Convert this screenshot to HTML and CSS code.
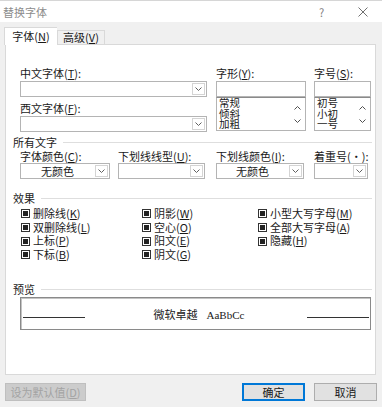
FILE: index.html
```html
<!DOCTYPE html>
<html lang="zh">
<head>
<meta charset="utf-8">
<link rel="stylesheet" href="styles.css">
</head>
<body>
<div class="dialog">
  <div class="titlebar">
    <span class="title">替换字体</span>
    <span class="help">?</span>
    <span class="close"><svg width="10" height="10" viewBox="0 0 10 10"><path d="M0.5 0.5L9.5 9.5M9.5 0.5L0.5 9.5" stroke="#707070" stroke-width="1" fill="none"/></svg></span>
  </div>
  <div class="tabs">
    <div class="tab active">字体(<u>N</u>)</div>
    <div class="tab">高级(<u>V</u>)</div>
  </div>
  <div class="panel">
    <div class="fonts">
      <div class="col c1">
        <div class="lbl">中文字体(<u>T</u>):</div>
        <div class="combo w186"><span class="val"></span><span class="arr"><svg width="7" height="4" viewBox="0 0 7 4"><path d="M0.5 0.5L3.5 3.5L6.5 0.5" stroke="#606060" fill="none"/></svg></span></div>
        <div class="lbl l2">西文字体(<u>F</u>):</div>
        <div class="combo w186"><span class="val"></span><span class="arr"><svg width="7" height="4" viewBox="0 0 7 4"><path d="M0.5 0.5L3.5 3.5L6.5 0.5" stroke="#606060" fill="none"/></svg></span></div>
      </div>
      <div class="col c2">
        <div class="lbl">字形(<u>Y</u>):</div>
        <div class="input"></div>
        <div class="list">
          <div class="items"><div>常规</div><div>倾斜</div><div>加粗</div></div>
          <div class="scroll">
            <svg width="7" height="4" viewBox="0 0 7 4"><path d="M0.5 3.5L3.5 0.5L6.5 3.5" stroke="#505050" fill="none"/></svg>
            <svg width="7" height="4" viewBox="0 0 7 4"><path d="M0.5 0.5L3.5 3.5L6.5 0.5" stroke="#505050" fill="none"/></svg>
          </div>
        </div>
      </div>
      <div class="col c3">
        <div class="lbl">字号(<u>S</u>):</div>
        <div class="input"></div>
        <div class="list">
          <div class="items"><div>初号</div><div>小初</div><div>一号</div></div>
          <div class="scroll">
            <svg width="7" height="4" viewBox="0 0 7 4"><path d="M0.5 3.5L3.5 0.5L6.5 3.5" stroke="#505050" fill="none"/></svg>
            <svg width="7" height="4" viewBox="0 0 7 4"><path d="M0.5 0.5L3.5 3.5L6.5 0.5" stroke="#505050" fill="none"/></svg>
          </div>
        </div>
      </div>
    </div>

    <div class="section s-all"><span>所有文字</span><i></i></div>
    <div class="allrow">
      <div class="cell">
        <div class="lbl">字体颜色(<u>C</u>):</div>
        <div class="combo w90"><span class="val">无颜色</span><span class="arr"><svg width="7" height="4" viewBox="0 0 7 4"><path d="M0.5 0.5L3.5 3.5L6.5 0.5" stroke="#606060" fill="none"/></svg></span></div>
      </div>
      <div class="cell">
        <div class="lbl">下划线线型(<u>U</u>):</div>
        <div class="combo w87"><span class="val"></span><span class="arr"><svg width="7" height="4" viewBox="0 0 7 4"><path d="M0.5 0.5L3.5 3.5L6.5 0.5" stroke="#606060" fill="none"/></svg></span></div>
      </div>
      <div class="cell">
        <div class="lbl">下划线颜色(<u>I</u>):</div>
        <div class="combo w88"><span class="val">无颜色</span><span class="arr"><svg width="7" height="4" viewBox="0 0 7 4"><path d="M0.5 0.5L3.5 3.5L6.5 0.5" stroke="#606060" fill="none"/></svg></span></div>
      </div>
      <div class="cell last">
        <div class="lbl">着重号(·):</div>
        <div class="combo w54"><span class="val"></span><span class="arr"><svg width="7" height="4" viewBox="0 0 7 4"><path d="M0.5 0.5L3.5 3.5L6.5 0.5" stroke="#606060" fill="none"/></svg></span></div>
      </div>
    </div>

    <div class="section s-eff"><span>效果</span><i></i></div>
    <div class="effects">
      <div class="ecol e1">
        <div class="cb"><b></b>删除线(<u>K</u>)</div>
        <div class="cb"><b></b>双删除线(<u>L</u>)</div>
        <div class="cb"><b></b>上标(<u>P</u>)</div>
        <div class="cb"><b></b>下标(<u>B</u>)</div>
      </div>
      <div class="ecol e2">
        <div class="cb"><b></b>阴影(<u>W</u>)</div>
        <div class="cb"><b></b>空心(<u>O</u>)</div>
        <div class="cb"><b></b>阳文(<u>E</u>)</div>
        <div class="cb"><b></b>阴文(<u>G</u>)</div>
      </div>
      <div class="ecol e3">
        <div class="cb"><b></b>小型大写字母(<u>M</u>)</div>
        <div class="cb"><b></b>全部大写字母(<u>A</u>)</div>
        <div class="cb"><b></b>隐藏(<u>H</u>)</div>
      </div>
    </div>

    <div class="section s-prev"><span>预览</span><i></i></div>
    <div class="preview">
      <i class="pl"></i>
      <span class="ptext"><span class="cn">微软卓越</span><span class="en">AaBbCc</span></span>
      <i class="pl"></i>
    </div>
  </div>
  <div class="buttons">
    <div class="btn disabled">设为默认值(<u>D</u>)</div>
    <div class="spacer"></div>
    <div class="btn ok">确定</div>
    <div class="btn cancel">取消</div>
  </div>
</div>
</body>
</html>
```

FILE: styles.css
```css
html, body {
  margin: 0;
  padding: 0;
}
body {
  width: 382px;
  height: 407px;
  overflow: hidden;
  background: #f0f0f0;
  font-family: "Noto Sans CJK SC", "Noto Sans", sans-serif;
  font-size: 11px;
  color: #1a1a1a;
}
u { text-decoration: underline; text-underline-offset: 1px; }
.dialog {
  width: 382px;
  height: 407px;
  display: flex;
  flex-direction: column;
}
.titlebar {
  height: 21px;
  background: #fff;
  border-top: 1px solid #d6d6d6;
  display: flex;
  align-items: center;
  padding-left: 3px;
}
.title {
  color: #8c8c8c;
  font-size: 11px;
  line-height: 14px;
  flex: 1;
}
.help {
  color: #808080;
  font-size: 11px;
  width: 10px;
  margin-right: 29px;
  line-height: 14px;
}
.close {
  width: 10px;
  height: 10px;
  margin-right: 14px;
  display: flex;
}
.tabs {
  display: flex;
  align-items: flex-end;
  margin-top: 5px;
  padding-left: 4px;
  height: 17px;
}
.tab {
  box-sizing: border-box;
  height: 14px;
  border: 1px solid #d9d9d9;
  border-bottom: none;
  background: #f0f0f0;
  line-height: 13px;
  width: 48px;
  text-align: center;
  padding: 0;
}
.tab.active {
  height: 18px;
  width: 53px;
  background: #fff;
  line-height: 17px;
  margin-bottom: -1px;
  position: relative;
  z-index: 1;
  border-right: none;
}
.panel {
  box-sizing: border-box;
  margin: 0 6px 0 5px;
  height: 331px;
  border: 1px solid #d9d9d9;
  background: #fff;
  padding: 21px 0 0 7px;
}
.lbl {
  height: 14px;
  line-height: 14px;
  white-space: nowrap;
}
.fonts {
  display: flex;
  margin-left: 7px;
  height: 65px;
}
.c1 { width: 186px; margin-right: 10px; flex: none; }
.c2 { width: 90px; margin-right: 8px; flex: none; }
.c3 { width: 57px; flex: none; }
.combo {
  box-sizing: border-box;
  height: 16px;
  border: 1px solid #b4b4b4;
  display: flex;
  background: #fff;
}
.c1 .combo { margin-top: 1px; }
.c1 .l2 { margin-top: 4px; }
.combo .val {
  flex: 1;
  text-align: center;
  line-height: 14px;
}
.combo .arr {
  box-sizing: border-box;
  width: 13px;
  margin: 1px;
  border: 1px solid #d4d4d4;
  display: flex;
  align-items: center;
  justify-content: center;
}
.w186 { width: 187px; }
.w90 { width: 90px; }
.w87 { width: 87px; }
.w88 { width: 88px; }
.w54 { width: 54px; }
.input {
  box-sizing: border-box;
  margin-top: 1px;
  height: 16px;
  border: 1px solid #b4b4b4;
}
.list {
  box-sizing: border-box;
  height: 34px;
  border: 1px solid #b4b4b4;
  border-top: 1px solid #8a8a8a;
  display: flex;
  overflow: hidden;
}
.items {
  flex: 1;
  padding-left: 2px;
  font-size: 10.5px;
  line-height: 10.5px;
  padding-top: 0;
}
.scroll {
  width: 16px;
  display: flex;
  flex-direction: column;
  justify-content: space-between;
  align-items: center;
  padding: 8px 0 7px;
  box-sizing: border-box;
}
.section {
  display: flex;
  align-items: center;
  height: 14px;
  line-height: 14px;
  padding-right: 3px;
}
.section span { margin-right: 6px; }
.section i {
  flex: 1;
  height: 1px;
  background: #dedede;
}
.s-all { margin-top: 4px; }
.allrow {
  display: flex;
  margin-left: 7px;
}
.cell { width: 98px; flex: none; }
.cell.last { width: 57px; }
.cell .lbl { height: 14px; }
.s-eff { margin-top: 12px; }
.effects {
  display: flex;
  margin-left: 8px;
  margin-top: 2px;
  height: 55px;
}
.ecol { display: flex; flex-direction: column; flex: none; }
.e1 { width: 121px; }
.e2 { width: 116px; }
.cb {
  height: 13.7px;
  line-height: 13.7px;
  display: flex;
  align-items: center;
  white-space: nowrap;
}
.cb b {
  box-sizing: border-box;
  width: 9px;
  height: 9px;
  border: 1px solid #333;
  background: #222;
  box-shadow: inset 0 0 0 1px #fff;
  margin-right: 3px;
  flex: none;
}
.s-prev { margin-top: 20px; }
.preview {
  box-sizing: border-box;
  margin: 1px 0 0 7px;
  width: 351px;
  height: 33px;
  border: 1px solid #8a8a8a;
  box-shadow: inset 1px 1px 0 #c4c4c4;
  display: flex;
  align-items: center;
  padding: 0 1px 0 2px;
}
.pl {
  width: 62px;
  height: 1px;
  background: #333;
  margin-top: 8px;
}
.ptext {
  flex: 1;
  text-align: center;
  padding-left: 6px;
}
.ptext .cn { margin-right: 9px; }
.ptext .en {
  font-family: "Liberation Serif", serif;
  font-size: 11px;
}
.buttons {
  display: flex;
  margin-top: 8px;
  padding: 0 5px 0 5px;
  height: 18px;
}
.spacer { flex: 1; }
.btn {
  box-sizing: border-box;
  height: 18px;
  line-height: 16px;
  text-align: center;
  border: 1px solid #adadad;
  background: #e1e1e1;
}
.btn.disabled {
  width: 81px;
  background: #cccccc;
  border-color: #bfbfbf;
  color: #a3a3a3;
}
.btn.ok {
  width: 63px;
  border: 2px solid #0078d7;
  line-height: 14px;
  margin-right: 9px;
}
.btn.cancel {
  width: 63px;
}
```
